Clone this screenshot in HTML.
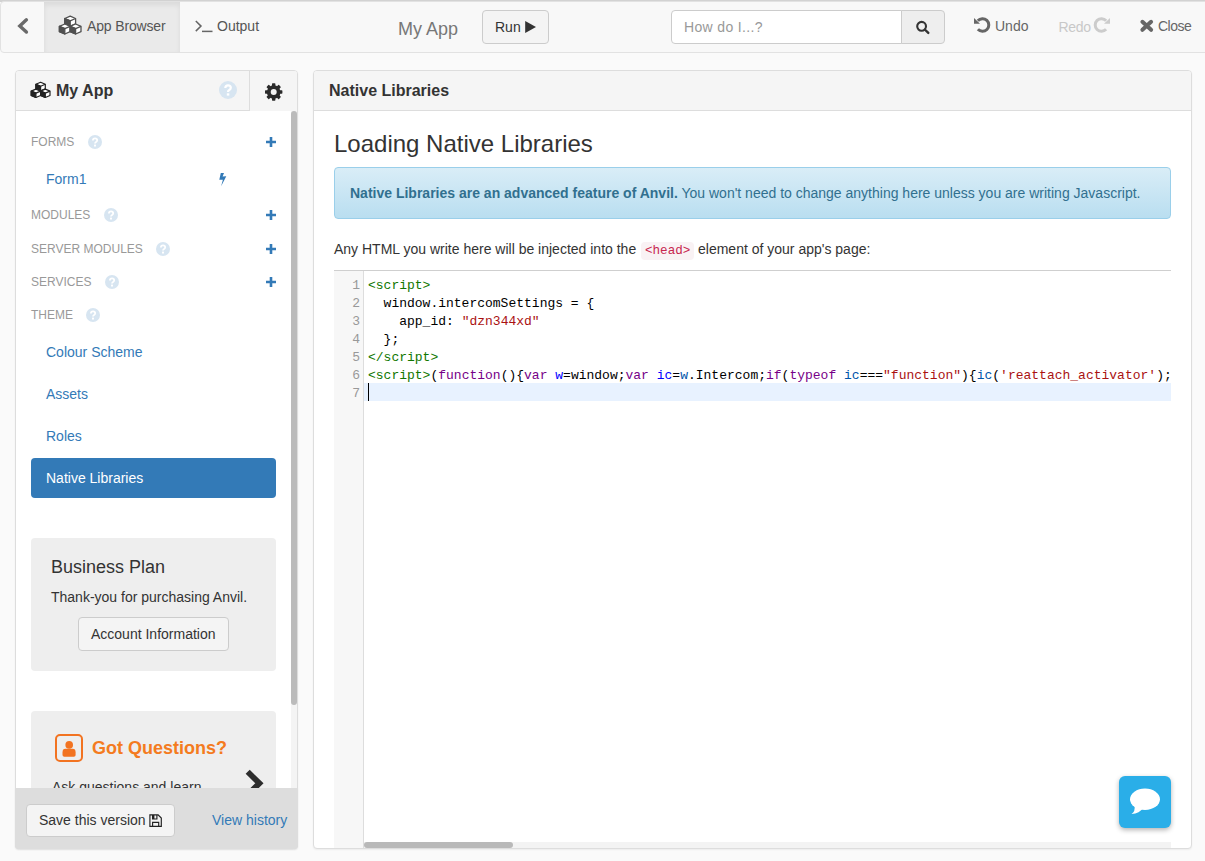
<!DOCTYPE html>
<html><head><meta charset="utf-8">
<style>
*{box-sizing:border-box;margin:0;padding:0}
html,body{width:1205px;height:861px;overflow:hidden;background:#fafafa;font-family:"Liberation Sans",sans-serif;color:#333;font-size:14px}
div,span.a{position:absolute;white-space:nowrap}
.t14{font-size:14px;line-height:20px}
.t12{font-size:12px;line-height:16px}
svg{position:absolute;overflow:visible}
#topline{left:0;top:0;width:1205px;height:2px;background:#d2d2d2}
#nav{left:0;top:1px;width:1220px;height:52px;background:#f8f8f8;border:1px solid #e2e2e2;border-radius:4px}
#tabAB{left:43px;top:0;width:136px;height:50px;background:#eaeaea;box-shadow:inset 0 3px 5px rgba(0,0,0,.07)}
.nt{color:#555}
.btn{background:#f4f4f4;border:1px solid #ccc;border-radius:4px}
.panel{top:70px;height:779px;border:1px solid #ddd;border-radius:4px;background:#fff;overflow:hidden;box-shadow:0 1px 2px rgba(0,0,0,.06)}
#leftp{left:15px;width:283px}
#rightp{left:313px;width:879px}
.phead{left:0;top:0;right:0;height:40px;background:#f5f5f5;border-bottom:1px solid #ddd}
.sect{left:15px;color:#999}
.qm{width:14px;height:14px;border-radius:50%;background:#d7e5f1}
.item{left:30px;color:#337ab7}
.code{font-family:"Liberation Mono",monospace;font-size:13px;line-height:18px;color:#000}
.ln{font-family:"Liberation Mono",monospace;font-size:13px;line-height:18px;color:#999;text-align:right;width:22px;left:0}
.tg{color:#170}.kw{color:#708}.df{color:#00f}.v2{color:#05a}.st{color:#a11}
</style></head><body>
<div id="topline"></div>
<div id="nav">
  <div id="tabAB"></div>
</div>
<!-- back chevron -->
<svg style="left:0;top:0" width="44" height="52"><path d="M26.4 19.8 L19.8 25.9 L26.4 32" fill="none" stroke="#6a6a6a" stroke-width="3.4" stroke-linecap="round"/></svg>
<!-- cubes icon in tab -->
<svg style="left:56px;top:13px" width="30" height="26"><g stroke="#505050" stroke-width="1.3" stroke-linejoin="round"><path d="M14.20 3.20 L19.60 5.50 L19.60 10.90 L14.20 13.20 L8.80 10.90 L8.80 5.50 Z" fill="#fff"/><path d="M8.80 5.50 L14.20 7.80 L14.20 13.20 L8.80 10.90 Z" fill="#505050"/><path d="M8.80 5.50 L14.20 7.80 L19.60 5.50" fill="none"/><path d="M8.80 11.00 L14.20 13.30 L14.20 18.70 L8.80 21.00 L3.40 18.70 L3.40 13.30 Z" fill="#fff"/><path d="M3.40 13.30 L8.80 15.60 L8.80 21.00 L3.40 18.70 Z" fill="#505050"/><path d="M3.40 13.30 L8.80 15.60 L14.20 13.30" fill="none"/><path d="M19.60 11.00 L25.00 13.30 L25.00 18.70 L19.60 21.00 L14.20 18.70 L14.20 13.30 Z" fill="#fff"/><path d="M14.20 13.30 L19.60 15.60 L19.60 21.00 L14.20 18.70 Z" fill="#505050"/><path d="M14.20 13.30 L19.60 15.60 L25.00 13.30" fill="none"/></g></svg>
<div class="t14 nt" style="left:87px;top:15.6px;letter-spacing:-0.15px">App Browser</div>
<svg style="left:195px;top:19px" width="20" height="15"><path d="M0.8 2 L6 7.1 L0.8 12.1" fill="none" stroke="#666" stroke-width="1.5"/><path d="M7 12.4 H17.5" stroke="#666" stroke-width="1.5"/></svg>
<div class="t14 nt" style="left:217px;top:15.8px">Output</div>

<div style="left:398px;top:16.5px;font-size:18px;line-height:24px;color:#777">My App</div>
<div class="btn" style="left:482px;top:10px;width:67px;height:34px"></div>
<div class="t14" style="left:495px;top:17px;color:#333">Run</div>
<svg style="left:525px;top:20.8px" width="13" height="13"><path d="M0.2 0 L11 6 L0.2 12 Z" fill="#333"/></svg>

<div style="left:671px;top:10px;width:231px;height:34px;background:#fff;border:1px solid #ccc;border-radius:4px 0 0 4px"></div>
<div class="t14" style="left:684px;top:16.5px;color:#999;letter-spacing:0.35px">How do I...?</div>
<div style="left:901px;top:10px;width:44px;height:34px;background:#eee;border:1px solid #ccc;border-radius:0 4px 4px 0"></div>
<svg style="left:915px;top:20px" width="16" height="16"><circle cx="6.6" cy="6.3" r="4.4" fill="none" stroke="#333" stroke-width="2.1"/><path d="M9.8 9.5 L13.3 12.9" stroke="#333" stroke-width="2.4" stroke-linecap="round"/></svg>

<svg style="left:968px;top:12px" width="24" height="24" viewBox="0 0 24 24"><path d="M9.82 8.78 A6.3 6.3 0 1 1 9.89 17.3" fill="none" stroke="#666" stroke-width="3"/><path d="M6 5.9 L6 11.8 L12 11.8 Z" fill="#666"/></svg>
<div class="t14" style="left:995px;top:16px;color:#666">Undo</div>
<div class="t14" style="left:1058.5px;top:16.5px;color:#c8c8c8;letter-spacing:-0.35px">Redo</div>
<svg style="left:1092px;top:12px" width="24" height="24" viewBox="0 0 24 24"><g transform="translate(24 0) scale(-1 1)"><path d="M9.82 8.78 A6.3 6.3 0 1 1 9.89 17.3" fill="none" stroke="#ccc" stroke-width="3"/><path d="M6 5.9 L6 11.8 L12 11.8 Z" fill="#ccc"/></g></svg>
<svg style="left:1140px;top:19px" width="14" height="14"><path d="M2.4 2.85 L11.1 10.8 M11.1 2.85 L2.4 10.8" stroke="#666" stroke-width="4" stroke-linecap="round"/></svg>
<div class="t14" style="left:1158px;top:16px;color:#666;letter-spacing:-0.5px">Close</div>

<!-- LEFT PANEL -->
<div id="leftp" class="panel">
  <div class="phead"></div>
  <div style="left:233px;top:0;width:49px;height:40px;border-left:1px solid #ddd;background:#f5f5f5"></div>
</div>

<!-- RIGHT PANEL -->
<div id="rightp" class="panel">
  <div class="phead"></div>
</div>

<!-- left header -->
<svg style="left:28px;top:78px" width="26" height="24"><g stroke="#222" stroke-width="1.2" stroke-linejoin="round"><path d="M12.60 4.30 L17.30 6.30 L17.30 10.70 L12.60 12.70 L7.90 10.70 L7.90 6.30 Z" fill="#fff"/><path d="M7.90 6.30 L12.60 8.30 L12.60 12.70 L7.90 10.70 Z" fill="#222"/><path d="M7.90 6.30 L12.60 8.30 L17.30 6.30" fill="none"/><path d="M7.90 11.10 L12.60 13.10 L12.60 17.50 L7.90 19.50 L3.20 17.50 L3.20 13.10 Z" fill="#fff"/><path d="M3.20 13.10 L7.90 15.10 L7.90 19.50 L3.20 17.50 Z" fill="#222"/><path d="M3.20 13.10 L7.90 15.10 L12.60 13.10" fill="none"/><path d="M17.30 11.10 L22.00 13.10 L22.00 17.50 L17.30 19.50 L12.60 17.50 L12.60 13.10 Z" fill="#fff"/><path d="M12.60 13.10 L17.30 15.10 L17.30 19.50 L12.60 17.50 Z" fill="#222"/><path d="M12.60 13.10 L17.30 15.10 L22.00 13.10" fill="none"/></g></svg>
<div style="left:56px;top:80.5px;font-size:16px;line-height:20px;font-weight:bold;color:#333">My App</div>
<div class="qm" style="left:219px;top:81px;width:18px;height:18px"></div>
<svg style="left:219px;top:81px" width="18" height="18"><path d="M6.3 7 Q6.3 4.3 9 4.3 Q11.8 4.3 11.8 6.8 Q11.8 8.3 10 9.2 Q9 9.7 9 11" fill="none" stroke="#fff" stroke-width="2.2"/><rect x="7.8" y="12.3" width="2.5" height="2.3" fill="#fff"/></svg>
<svg style="left:264px;top:82px" width="20" height="20" viewBox="0 0 20 20"><g transform="translate(9.7 10)" fill="#2b2b2b"><rect x="-1.7" y="-8.7" width="3.4" height="17.4" rx="0.6"/><rect x="-1.7" y="-8.7" width="3.4" height="17.4" rx="0.6" transform="rotate(45)"/><rect x="-1.7" y="-8.7" width="3.4" height="17.4" rx="0.6" transform="rotate(90)"/><rect x="-1.7" y="-8.7" width="3.4" height="17.4" rx="0.6" transform="rotate(135)"/><circle r="6.8"/><circle r="3" fill="#f5f5f5"/></g></svg>
<div style="left:291px;top:111px;width:6px;height:677px;background:#f4f4f4"></div><div style="left:291px;top:111px;width:6px;height:594px;background:#bbb;border-radius:3px"></div>

<!-- sections -->
<div class="t12 sect" style="left:31px;top:133.8px">FORMS</div>
<div class="qm" style="left:88px;top:134.5px"></div>
<svg style="left:88px;top:134.5px" width="14" height="14"><path d="M4.9 5.4 Q4.9 3.3 7 3.3 Q9.2 3.3 9.2 5.3 Q9.2 6.5 7.8 7.2 Q7 7.6 7 8.6" fill="none" stroke="#fff" stroke-width="1.8"/><rect x="6" y="9.6" width="2" height="1.9" fill="#fff"/></svg>
<svg style="left:266px;top:136.5px" width="10" height="10"><path d="M5 0 V10 M0 5 H10" stroke="#337ab7" stroke-width="2.6"/></svg>
<div class="t12 sect" style="left:31px;top:206.8px">MODULES</div>
<div class="qm" style="left:104px;top:207.5px"></div>
<svg style="left:104px;top:207.5px" width="14" height="14"><path d="M4.9 5.4 Q4.9 3.3 7 3.3 Q9.2 3.3 9.2 5.3 Q9.2 6.5 7.8 7.2 Q7 7.6 7 8.6" fill="none" stroke="#fff" stroke-width="1.8"/><rect x="6" y="9.6" width="2" height="1.9" fill="#fff"/></svg>
<svg style="left:266px;top:209.5px" width="10" height="10"><path d="M5 0 V10 M0 5 H10" stroke="#337ab7" stroke-width="2.6"/></svg>
<div class="t12 sect" style="left:31px;top:240.8px">SERVER MODULES</div>
<div class="qm" style="left:156px;top:241.5px"></div>
<svg style="left:156px;top:241.5px" width="14" height="14"><path d="M4.9 5.4 Q4.9 3.3 7 3.3 Q9.2 3.3 9.2 5.3 Q9.2 6.5 7.8 7.2 Q7 7.6 7 8.6" fill="none" stroke="#fff" stroke-width="1.8"/><rect x="6" y="9.6" width="2" height="1.9" fill="#fff"/></svg>
<svg style="left:266px;top:243.5px" width="10" height="10"><path d="M5 0 V10 M0 5 H10" stroke="#337ab7" stroke-width="2.6"/></svg>
<div class="t12 sect" style="left:31px;top:274.3px">SERVICES</div>
<div class="qm" style="left:105px;top:275.0px"></div>
<svg style="left:105px;top:275.0px" width="14" height="14"><path d="M4.9 5.4 Q4.9 3.3 7 3.3 Q9.2 3.3 9.2 5.3 Q9.2 6.5 7.8 7.2 Q7 7.6 7 8.6" fill="none" stroke="#fff" stroke-width="1.8"/><rect x="6" y="9.6" width="2" height="1.9" fill="#fff"/></svg>
<svg style="left:266px;top:277.0px" width="10" height="10"><path d="M5 0 V10 M0 5 H10" stroke="#337ab7" stroke-width="2.6"/></svg>
<div class="t12 sect" style="left:31px;top:306.8px">THEME</div>
<div class="qm" style="left:86px;top:307.5px"></div>
<svg style="left:86px;top:307.5px" width="14" height="14"><path d="M4.9 5.4 Q4.9 3.3 7 3.3 Q9.2 3.3 9.2 5.3 Q9.2 6.5 7.8 7.2 Q7 7.6 7 8.6" fill="none" stroke="#fff" stroke-width="1.8"/><rect x="6" y="9.6" width="2" height="1.9" fill="#fff"/></svg>
<div class="t14 item" style="left:46px;top:169.2px">Form1</div>
<div class="t14 item" style="left:46px;top:342.1px">Colour Scheme</div>
<div class="t14 item" style="left:46px;top:384.1px">Assets</div>
<div class="t14 item" style="left:46px;top:426.1px">Roles</div>
<svg style="left:217px;top:172px" width="12" height="16"><path d="M3.8 1 L7 1 L5.6 4.4 L9.3 4.3 L4.1 14.2 L5.9 7.8 L2.3 7.8 Z" fill="#337ab7"/></svg>
<div style="left:31px;top:458px;width:245px;height:40px;background:#337ab7;border-radius:4px"></div>
<div class="t14" style="left:46px;top:468.2px;color:#fff">Native Libraries</div>

<!-- business plan -->
<div style="left:31px;top:538px;width:245px;height:133px;background:#eee;border-radius:4px"></div>
<div style="left:51px;top:554.8px;font-size:18px;line-height:24px;color:#333">Business Plan</div>
<div class="t14" style="left:51px;top:587.2px;color:#333">Thank-you for purchasing Anvil.</div>
<div class="btn" style="left:78px;top:617px;width:151px;height:34px"></div>
<div class="t14" style="left:91px;top:624px;color:#333">Account Information</div>

<!-- got questions -->
<div style="left:31px;top:711px;width:245px;height:120px;background:#eee;border-radius:4px"></div>
<div style="left:54.6px;top:733.8px;width:28.5px;height:28.1px;border:2.6px solid #f27321;border-radius:5px"></div>
<svg style="left:54.6px;top:733.8px" width="29" height="29"><circle cx="14.2" cy="10.9" r="3.8" fill="#f27321"/><path d="M7.5 18.2 Q7.5 14.8 10.5 14.8 L17.6 14.8 Q20.6 14.8 20.6 18.2 L20.6 21 Q20.6 22.8 18.8 22.8 L9.3 22.8 Q7.5 22.8 7.5 21 Z" fill="#f27321"/></svg>
<div style="left:92px;top:735.8px;font-size:18px;line-height:24px;font-weight:bold;color:#f47b20">Got Questions?</div>
<div class="t14" style="left:52px;top:777.3px;color:#333">Ask questions and learn</div>
<svg style="left:240px;top:765px" width="30" height="36"><path d="M7.7 6.8 L19.4 18.3 L7.7 29.8" fill="none" stroke="#2d2d2d" stroke-width="5.8" stroke-linejoin="miter"/></svg>

<!-- footer -->
<div style="left:15px;top:788px;width:283px;height:60.5px;background:#ddd;border-radius:0 0 4px 4px;box-shadow:0 1px 2px rgba(0,0,0,.06)"></div>
<div class="btn" style="left:26px;top:803.5px;width:149px;height:33px"></div>
<div class="t14" style="left:39px;top:810px;color:#333">Save this version</div>
<svg style="left:149px;top:813.6px" width="14" height="14"><g fill="none" stroke="#222" stroke-width="1.15"><path d="M0.9 0.9 H9.1 L12.3 4 V12.4 H0.9 Z"/><path d="M3.6 0.9 V5 H7.9 V0.9"/><path d="M3.6 12.4 V8.3 H9.7 V12.4"/></g><rect x="3.6" y="1" width="1.8" height="4" fill="#222"/></svg>
<div class="t14" style="left:212px;top:810px;color:#337ab7">View history</div>

<!-- right panel content -->
<div style="left:329px;top:81px;font-size:16px;line-height:20px;font-weight:bold;color:#333">Native Libraries</div>
<div style="left:334px;top:128.7px;font-size:24px;line-height:30px;color:#333">Loading Native Libraries</div>
<div style="left:334px;top:167px;width:837px;height:52px;border:1px solid #9acfea;border-radius:4px;background:linear-gradient(to bottom,#d9edf7 0,#b9def0 100%)"></div>
<div class="t14" style="left:350px;top:183.2px;color:#31708f"><b>Native Libraries are an advanced feature of Anvil.</b> You won't need to change anything here unless you are writing Javascript.</div>
<div class="t14" style="left:334px;top:239.2px;color:#333">Any HTML you write here will be injected into the</div>
<div style="left:641px;top:242px;width:53px;height:18px;background:#f9f2f4;border-radius:4px"></div>
<div style="left:645px;top:242px;font-family:'Liberation Mono',monospace;font-size:12.6px;line-height:18px;color:#c7254e">&lt;head&gt;</div>
<div class="t14" style="left:698px;top:239.2px;color:#333">element of your app's page:</div>

<!-- editor -->
<div style="left:334px;top:270px;width:837px;height:578px;overflow:hidden;border-top:1px solid #cfcfcf;background:#fff">
  <div style="left:0;top:0;width:30px;height:600px;background:#f7f7f7;border-right:1px solid #ddd"></div>
  <div style="left:30px;top:112px;width:820px;height:18px;background:#e8f2ff"></div>
  <div style="left:33.5px;top:112px;width:1px;height:18px;background:#000"></div>
  <div style="left:30px;top:571px;width:807px;height:7px;background:#f3f3f3"></div>
  <div style="left:30px;top:571px;width:149px;height:6px;background:#b9b9b9;border-radius:3px"></div>
  <div class="ln" style="top:6px;left:4px">1</div>
  <div class="code" style="left:34px;top:6px;white-space:pre"><span class="tg">&lt;script&gt;</span></div>
  <div class="ln" style="top:24px;left:4px">2</div>
  <div class="code" style="left:34px;top:24px;white-space:pre">  window.intercomSettings = {</div>
  <div class="ln" style="top:42px;left:4px">3</div>
  <div class="code" style="left:34px;top:42px;white-space:pre">    app_id: <span class="st">"dzn344xd"</span></div>
  <div class="ln" style="top:60px;left:4px">4</div>
  <div class="code" style="left:34px;top:60px;white-space:pre">  };</div>
  <div class="ln" style="top:78px;left:4px">5</div>
  <div class="code" style="left:34px;top:78px;white-space:pre"><span class="tg">&lt;/script&gt;</span></div>
  <div class="ln" style="top:96px;left:4px">6</div>
  <div class="code" style="left:34px;top:96px;white-space:pre"><span class="tg">&lt;script&gt;</span>(<span class="kw">function</span>(){<span class="kw">var</span> <span class="df">w</span>=window;<span class="kw">var</span> <span class="df">ic</span>=<span class="v2">w</span>.Intercom;<span class="kw">if</span>(<span class="kw">typeof</span> <span class="v2">ic</span>===<span class="st">"function"</span>){<span class="v2">ic</span>(<span class="st">'reattach_activator'</span>);<span class="v2">ic</span>(<span class="st">'update'</span>,<span class="v2">intercomSettings</span>);}</div>
  <div class="ln" style="top:114px;left:4px">7</div>
  <div class="code" style="left:34px;top:114px;white-space:pre"></div>
</div>
<!-- chat -->
<div style="left:1119px;top:776px;width:52px;height:52px;background:#2aaee8;border-radius:6px;box-shadow:0 2px 5px rgba(0,0,0,.3)"></div>
<svg style="left:1119px;top:776px" width="52" height="52" viewBox="0 0 52 52"><ellipse cx="26" cy="23.2" rx="15" ry="10.7" fill="#fff"/><path d="M15.5 29.5 Q16.5 35.5 12.5 38 Q20.5 37.5 24.5 31.5 Z" fill="#fff"/></svg>
</body></html>
